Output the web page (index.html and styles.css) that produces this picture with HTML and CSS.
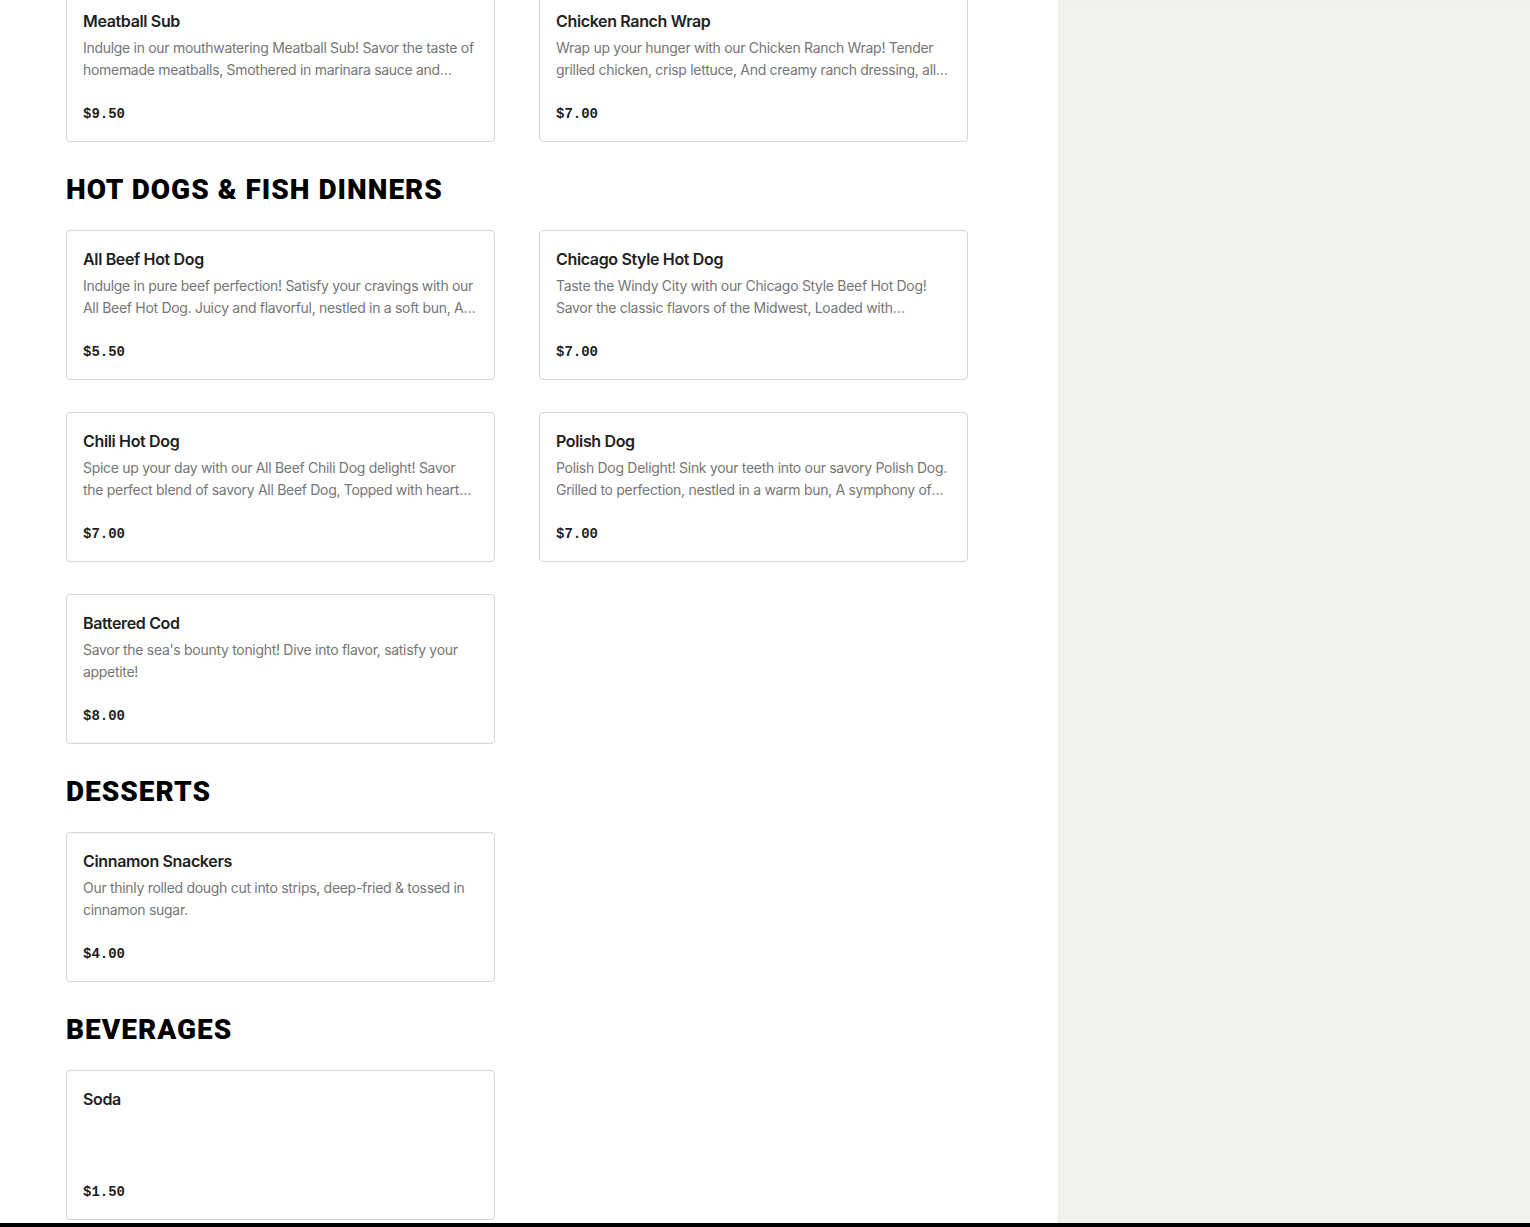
FILE: index.html
```html
<!DOCTYPE html>
<html lang="en">
<head>
<meta charset="utf-8">
<title>Menu</title>
<link rel="stylesheet" href="styles.css">
</head>
<body>
<div class="layout">
  <main class="menu">
    <section class="section first">
      <div class="grid">
        <article class="card">
          <h3 class="title">Meatball Sub</h3>
          <p class="desc">Indulge in our mouthwatering Meatball Sub! Savor the taste of homemade meatballs, Smothered in marinara sauce and melted cheese, all on a toasted roll.</p>
          <div class="price">$9.50</div>
        </article>
        <article class="card">
          <h3 class="title">Chicken Ranch Wrap</h3>
          <p class="desc">Wrap up your hunger with our Chicken Ranch Wrap! Tender grilled chicken, crisp lettuce, And creamy ranch dressing, all wrapped in a soft tortilla.</p>
          <div class="price">$7.00</div>
        </article>
      </div>
    </section>

    <section class="section">
      <h2 class="heading">HOT DOGS &amp; FISH DINNERS</h2>
      <div class="grid">
        <article class="card">
          <h3 class="title">All Beef Hot Dog</h3>
          <p class="desc">Indulge in pure beef perfection! Satisfy your cravings with our All Beef Hot Dog. Juicy and flavorful, nestled in a soft bun, A classic favorite.</p>
          <div class="price">$5.50</div>
        </article>
        <article class="card">
          <h3 class="title">Chicago Style Hot Dog</h3>
          <p class="desc">Taste the Windy City with our Chicago Style Beef Hot Dog! Savor the classic flavors of the Midwest, Loaded with mustard, relish, onions, tomatoes and peppers.</p>
          <div class="price">$7.00</div>
        </article>
        <article class="card">
          <h3 class="title">Chili Hot Dog</h3>
          <p class="desc">Spice up your day with our All Beef Chili Dog delight! Savor the perfect blend of savory All Beef Dog, Topped with hearty chili and cheese.</p>
          <div class="price">$7.00</div>
        </article>
        <article class="card">
          <h3 class="title">Polish Dog</h3>
          <p class="desc">Polish Dog Delight! Sink your teeth into our savory Polish Dog. Grilled to perfection, nestled in a warm bun, A symphony of flavors in every bite.</p>
          <div class="price">$7.00</div>
        </article>
        <article class="card">
          <h3 class="title">Battered Cod</h3>
          <p class="desc">Savor the sea's bounty tonight! Dive into flavor, satisfy your appetite!</p>
          <div class="price">$8.00</div>
        </article>
      </div>
    </section>

    <section class="section">
      <h2 class="heading">DESSERTS</h2>
      <div class="grid">
        <article class="card">
          <h3 class="title">Cinnamon Snackers</h3>
          <p class="desc">Our thinly rolled dough cut into strips, deep-fried &amp; tossed in cinnamon sugar.</p>
          <div class="price">$4.00</div>
        </article>
      </div>
    </section>

    <section class="section">
      <h2 class="heading">BEVERAGES</h2>
      <div class="grid">
        <article class="card">
          <h3 class="title">Soda</h3>
          <p class="desc"></p>
          <div class="price">$1.50</div>
        </article>
      </div>
    </section>
  </main>
  <aside class="side"></aside>
</div>
<footer class="footer"></footer>
</body>
</html>
```

FILE: styles.css
```css
* { box-sizing: border-box; }
html, body { margin: 0; padding: 0; }
body {
  background: #ffffff;
  font-family: Inter, "Liberation Sans", Arial, sans-serif;
  color: #1f1f1f;
}
.layout {
  display: flex;
  align-items: stretch;
}
.menu {
  width: 1058px;
  flex: none;
  padding: 0 90px 3px 66px;
  margin-top: -8px;
}
.side {
  flex: 1;
  background: #f2f1ed;
  box-shadow: inset 1px 0 2px rgba(0,0,0,0.04);
}
.section { margin-top: 30px; }
.section.first { margin-top: 0; }
.heading {
  margin: 0 0 22px;
  font-family: Roboto, "Liberation Sans", sans-serif;
  font-weight: 900;
  font-size: 28px;
  line-height: 36px;
  color: #000;
  letter-spacing: 1px;
}
.grid {
  display: grid;
  grid-template-columns: 429px 429px;
  column-gap: 44px;
  row-gap: 32px;
}
.card {
  border: 1px solid #d4d4d4;
  border-radius: 4px;
  padding: 16px;
  height: 150px;
  background: #fff;
}
.title {
  margin: 0;
  font-size: 16px;
  line-height: 24px;
  font-weight: 600;
  letter-spacing: -0.35px;
  color: #222;
}
.desc {
  margin: 4px 0 0;
  font-size: 14px;
  line-height: 22px;
  letter-spacing: -0.3px;
  color: #767676;
  height: 44px;
  display: -webkit-box;
  -webkit-line-clamp: 2;
  -webkit-box-orient: vertical;
  overflow: hidden;
}
.price {
  margin-top: 23px;
  font-family: "Liberation Mono", "DejaVu Sans Mono", monospace;
  font-weight: 700;
  font-size: 14px;
  line-height: 20px;
  color: #1e1e1e;
}
.footer {
  height: 60px;
  background: #000;
}
```
